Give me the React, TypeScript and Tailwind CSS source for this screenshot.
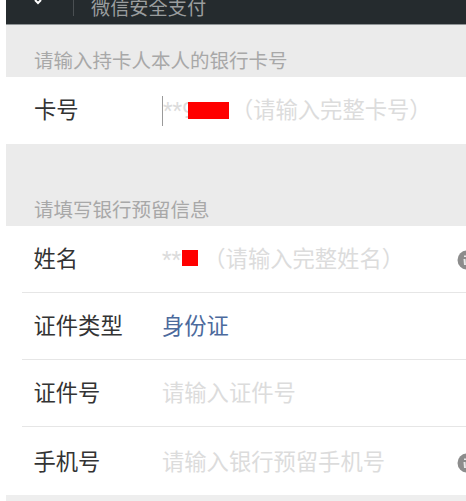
const cjk = "font-['Roboto','Noto_Sans_CJK_SC',sans-serif]";

function InfoIcon() {
  return (
    <svg className="ml-auto h-[20px] w-[9px] shrink-0" viewBox="0 0 9 20">
      <circle cx="10" cy="10" r="9.5" fill="#8c8c8c" />
      <path d="M7.5 9 L8 15 M8 5.5 L8 7" fill="none" stroke="#e8e8e8" strokeWidth="2" />
    </svg>
  );
}

interface RowProps {
  label: string;
  children: React.ReactNode;
  info?: boolean;
  last?: boolean;
}

function Row({ label, children, info, last }: RowProps) {
  return (
    <div className="bg-white pl-[16px]">
      <div className={`flex items-center ${last ? 'h-[68px] pt-[3px]' : 'h-[67px] border-b border-[#e6e6e6] pt-[2px]'}`}>
        <span className="w-[140px] shrink-0 pl-[11.5px] text-[22.3px] text-[#333333]">{label}</span>
        {children}
        {info && <InfoIcon />}
      </div>
    </div>
  );
}

export default function App() {
  return (
    <div className={`h-[501px] w-[466px] overflow-hidden bg-white pl-[6px] ${cjk}`}>
      {/* header is cut off by the top of the screenshot */}
      <div className="flex h-[25px] items-end overflow-hidden border-b border-[#8f9496] bg-[#252b2e]">
        <svg className="ml-[27px] mb-[16px] h-[10px] w-[10px] shrink-0" viewBox="0 0 10 10">
          <path d="M2 2 L5 5 L8 2" fill="none" stroke="#ffffff" strokeWidth="2" />
        </svg>
        <div className="ml-[30px] mb-[8px] h-[16px] w-px shrink-0 bg-[#4a4f52]" />
        <span className="ml-[17px] h-[32px] shrink-0 text-[19.2px] leading-[33px] text-[#9a9d9e]">微信安全支付</span>
      </div>

      <div className="flex h-[52px] items-end bg-[#ebebeb] pb-[2px] pl-[28px] text-[19.5px] leading-[26px] text-[#a8a8a8]">
        请输入持卡人本人的银行卡号
      </div>
      <div className="relative flex h-[67px] items-center bg-white pl-[28px]">
        <span className="w-[128px] shrink-0 text-[22.3px] text-[#333333]">卡号</span>
        <div className="h-[30px] w-px shrink-0 bg-[#9a9a9a]" />
        <span className="whitespace-nowrap text-[22.3px] text-[#dcdcdc]">**9&nbsp;&nbsp;&nbsp;&nbsp;&nbsp;&nbsp;<span className="ml-[3px]">（请输入完整卡号）</span></span>
        <div className="absolute left-[182px] top-[25px] h-[17px] w-[41px] bg-[#ff0000]" />
      </div>

      <div className="flex h-[82px] items-end bg-[#ebebeb] pb-[2px] pl-[28px] text-[19.5px] leading-[26px] text-[#a8a8a8]">
        请填写银行预留信息
      </div>
      <div className="relative">
        <Row label="姓名" info>
          <span className="whitespace-nowrap text-[22.3px] text-[#dcdcdc]">**&nbsp;&nbsp;&nbsp;&nbsp;（请输入完整姓名）</span>
        </Row>
        <div className="absolute left-[176px] top-[24px] h-[16px] w-[16px] bg-[#ff0000]" />
      </div>
      <Row label="证件类型">
        <span className="text-[22.3px] text-[#4c6a9c]">身份证</span>
      </Row>
      <Row label="证件号">
        <span className="text-[22.3px] text-[#dcdcdc]">请输入证件号</span>
      </Row>
      <Row label="手机号" info last>
        <span className="text-[22.3px] text-[#dcdcdc]">请输入银行预留手机号</span>
      </Row>
      <div className="h-[7px] bg-[#eeeeee]" />
    </div>
  );
}
